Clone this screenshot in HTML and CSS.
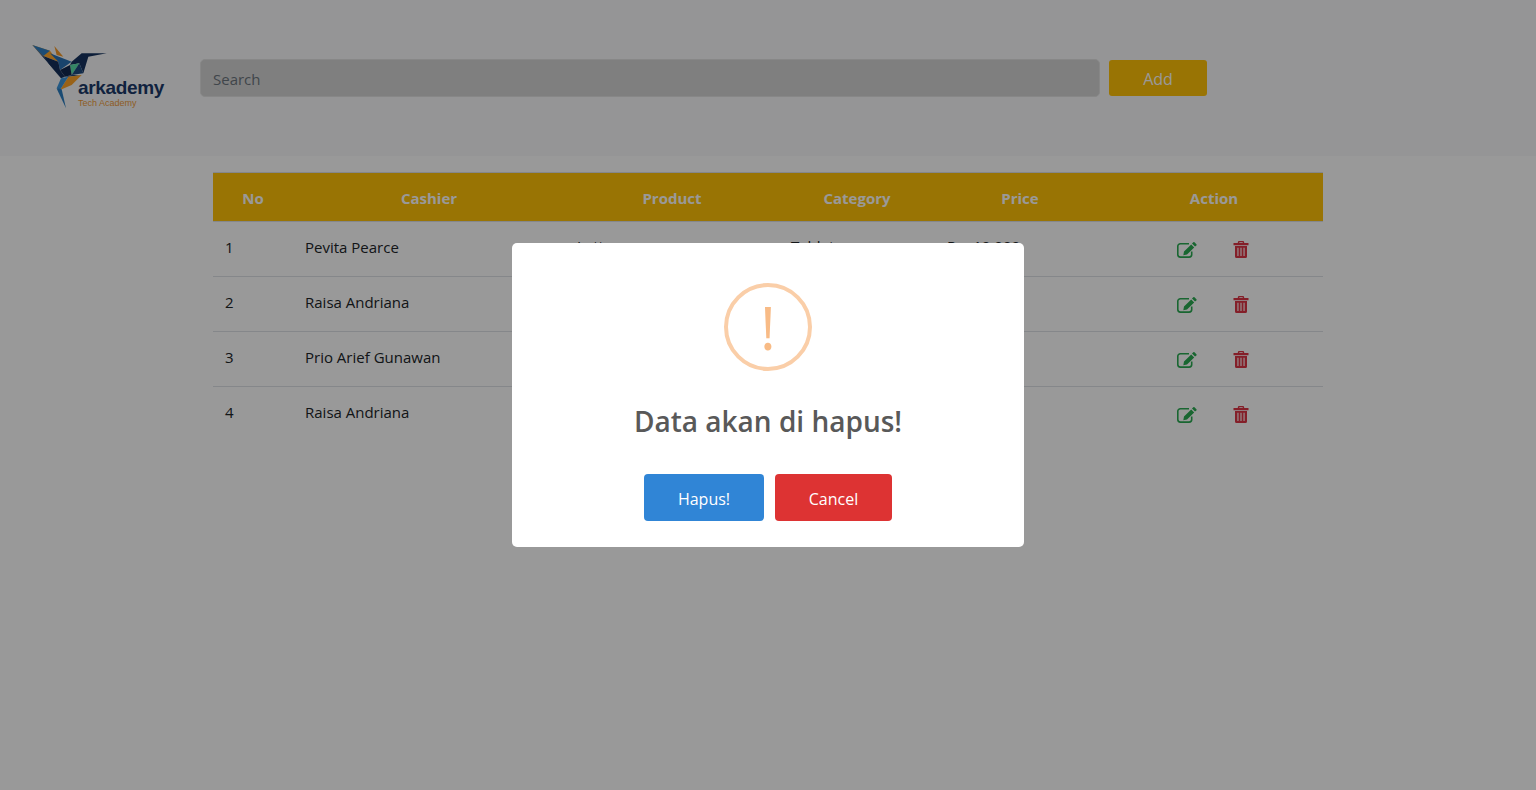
FILE: index.html
```html
<!DOCTYPE html>
<html lang="id">
<head>
<meta charset="utf-8">
<title>Arkademy</title>
<link rel="stylesheet" href="styles.css">
</head>
<body>
<header class="topbar">
  <div class="logo">
    <svg class="bird" viewBox="15 0 240 216" width="80" height="72" aria-hidden="true">
      <polygon points="22,15 55,48 108,115 70,70" fill="#16335f"/>
      <polygon points="22,15 75,32 100,65 55,48" fill="#ffa92e"/>
      <polygon points="22,15 75,32 55,48" fill="#2f7fc4"/>
      <polygon points="88,18 115,50 95,45" fill="#f59a2a"/>
      <polygon points="75,40 140,65 105,90 100,65" fill="#2a72b4"/>
      <polygon points="55,48 100,65 105,90 120,110 108,115 72,72" fill="#14305a"/>
      <polygon points="140,65 170,40 245,40 190,50 175,100 163,70 135,75" fill="#16335f"/>
      <polygon points="135,75 163,70 140,105" fill="#58e0a8"/>
      <polygon points="105,90 135,75 140,105 120,110" fill="#12294f"/>
      <polygon points="163,70 175,100 140,105" fill="#1d4a7d"/>
      <polygon points="120,110 140,105 170,105 130,110" fill="#1d4a7d"/>
      <polygon points="105,150 130,110 170,105 140,135" fill="#ffa428"/>
      <polygon points="108,115 130,110 105,150 95,145" fill="#3c96dc"/>
      <polygon points="95,145 110,148 123,205 97,150" fill="#2c7dc0"/>
    </svg>
    <div class="brand">arkademy</div>
    <div class="tag">Tech Academy</div>
  </div>
  <div class="search">Search</div>
  <div class="add">Add</div>
</header>
<main class="wrap">
  <table class="grid">
    <colgroup>
      <col class="c1"><col class="c2"><col class="c3"><col class="c4"><col class="c5"><col class="c6">
    </colgroup>
    <thead>
      <tr><th>No</th><th>Cashier</th><th>Product</th><th>Category</th><th>Price</th><th>Action</th></tr>
    </thead>
    <tbody>
      <tr><td>1</td><td>Pevita Pearce</td><td class="raised">Latte</td><td class="raised">Tablet</td><td class="raised">Rp. 10.000</td><td class="act"><svg class="edit" viewBox="0 0 20 16"><use href="#e"/></svg><svg class="del" viewBox="0 0 16 17"><use href="#t"/></svg></td></tr>
      <tr><td>2</td><td>Raisa Andriana</td><td>Latte</td><td>Tablet</td><td>Rp. 10.000</td><td class="act"><svg class="edit" viewBox="0 0 20 16"><use href="#e"/></svg><svg class="del" viewBox="0 0 16 17"><use href="#t"/></svg></td></tr>
      <tr><td>3</td><td>Prio Arief Gunawan</td><td>Latte</td><td>Tablet</td><td>Rp. 10.000</td><td class="act"><svg class="edit" viewBox="0 0 20 16"><use href="#e"/></svg><svg class="del" viewBox="0 0 16 17"><use href="#t"/></svg></td></tr>
      <tr><td>4</td><td>Raisa Andriana</td><td>Latte</td><td>Tablet</td><td>Rp. 10.000</td><td class="act"><svg class="edit" viewBox="0 0 20 16"><use href="#e"/></svg><svg class="del" viewBox="0 0 16 17"><use href="#t"/></svg></td></tr>
    </tbody>
  </table>
</main>
<svg class="defs" aria-hidden="true">
  <symbol id="e" viewBox="0 0 20 16">
    <path d="M14.700 9.500V12.500a2.600 2.600 0 0 1-2.600 2.600H3.400a2.600 2.600 0 0 1-2.600-2.600V4.300a2.600 2.600 0 0 1 2.600-2.600H12" fill="none" stroke="currentColor" stroke-width="1.600"/>
    <path d="M6.300 13.200l.7-3.600 7.200-7.200 3 3-7.200 7.100zM15 1.600l1.300-1.300a.9.900 0 0 1 1.200 0l1.900 1.900a.9.900 0 0 1 0 1.200L18 4.600z" fill="currentColor"/>
  </symbol>
  <symbol id="t" viewBox="0 0 16 17">
    <path fill-rule="evenodd" d="M4.800 2V1.400A1.400 1.400 0 0 1 6.200 0h3.600a1.400 1.400 0 0 1 1.400 1.400V2h4.300v2.200H.5V2zM6.300 2h3.400V1.300H6.300zM2 5h12v10.500a1.500 1.500 0 0 1-1.500 1.500h-9A1.500 1.500 0 0 1 2 15.500zM4.400 6.800v8.200h1.100V6.800zM7.450 6.800v8.200h1.100V6.800zM10.500 6.800v8.200h1.100V6.800z" fill="currentColor"/>
  </symbol>
</svg>
<div class="overlay">
  <div class="modal">
    <div class="alert-ring">!</div>
    <h2 class="title">Data akan di hapus!</h2>
    <div class="btns">
      <button class="btn ok">Hapus!</button>
      <button class="btn no">Cancel</button>
    </div>
  </div>
</div>
</body>
</html>
```
FILE: styles.css
```css
* { box-sizing: border-box; }
html, body { margin: 0; height: 100%; }
body { background: #fff; color: #212529; font-family: "Open Sans", "Noto Sans", sans-serif; font-size: 15px; overflow: hidden; }
.topbar { height: 156px; background: #f8f9fa; display: flex; align-items: flex-start; padding: 59px 0 0 200px; position: relative; }
.logo { position: absolute; left: 30px; top: 40px; width: 140px; height: 72px; }
.bird { display: block; }
.brand { position: absolute; left: 48px; top: 36px; font: 700 19px/24px "Liberation Sans", sans-serif; letter-spacing: -.35px; color: #1b3a69; }
.tag { position: absolute; left: 48px; top: 57px; font: 9px/12px "Liberation Sans", sans-serif; color: #ee9a3a; }
.search { width: 900px; height: 38px; background: #d4d4d4; border: 1px solid #e2e2e2; border-radius: 5px; padding: 0 12px; line-height: 39px; color: #6c757d; font-size: 15px; }
.add { margin: 1px 0 0 9px; width: 98px; height: 36px; background: #ffc107; border-radius: 3px; color: #fff; text-align: center; line-height: 39px; font-size: 16px; }
.wrap { padding: 16px 0 0 213px; }
.grid { width: 1110px; table-layout: fixed; border-collapse: collapse; }
.c1 { width: 80px; } .c2 { width: 272px; } .c3 { width: 214px; } .c4 { width: 156px; } .c5 { width: 170px; } .c6 { width: 218px; }
.grid th { height: 49px; background: #ffc107; color: #fff; font-weight: 700; font-size: 15px; border-top: 1px solid #dee2e6; border-bottom: 1px solid #dee2e6; padding: 1px 0 0; }
.grid td { height: 55px; padding: 0 12px 4px; border-bottom: 1px solid #dee2e6; }
.grid td.raised { padding-bottom: 7px; }
.grid tr:last-child td { border-bottom: 0; }
.grid td.act { white-space: nowrap; padding: 0 0 2px 72px; }
.edit { display: inline-block; vertical-align: middle; width: 20px; height: 16px; color: #2aab52; }
.del { display: inline-block; vertical-align: middle; width: 16px; height: 17px; margin-left: 36px; color: #dc3545; }
.defs { display: none; }
.overlay { position: fixed; inset: 0; background: rgba(0,0,0,.4); display: flex; align-items: flex-start; justify-content: center; padding-top: 243px; }
.modal { width: 512px; height: 304px; background: #fff; border-radius: 5px; padding-top: 40px; text-align: center; }
.alert-ring { width: 88px; height: 88px; margin: 0 auto; border: 4px solid #facea8; border-radius: 50%; color: #f8bb86; font: 400 60px/80px "Open Sans", sans-serif; }
.title { margin: 30px 0 0; color: #595959; font-size: 28px; line-height: 40px; font-weight: 600; }
.btns { display: flex; justify-content: center; gap: 11px; margin-top: 33px; }
.btn { height: 47px; border: 0; border-radius: 4px; color: #fff; font: 16px "Open Sans", sans-serif; padding: 2px 0 0; }
.ok { width: 120px; background: #3085d6; }
.no { width: 117px; background: #dd3333; }
```
